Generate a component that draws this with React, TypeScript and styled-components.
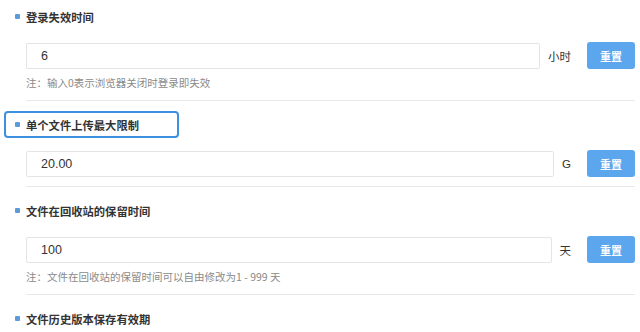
import styled, { createGlobalStyle } from 'styled-components';

const GlobalStyle = createGlobalStyle`
  html, body {
    margin: 0;
    padding: 0;
    background: #ffffff;
  }
  body {
    font-family: "Liberation Sans", "Noto Sans CJK SC", sans-serif;
    color: #333333;
  }
`;

const Page = styled.div`
  width: 640px;
  height: 332px;
  overflow: hidden;
  box-sizing: border-box;
  padding: 3px 5px 0 4px;
`;

const Section = styled.section`
  & + & {
    margin-top: 10px;
  }
`;

const TitleRow = styled.div<{ $active?: boolean }>`
  box-sizing: border-box;
  width: 175px;
  height: 27px;
  display: flex;
  align-items: center;
  padding-left: 9px;
  border: 2px solid ${p => (p.$active ? '#3d8fe0' : 'transparent')};
  border-radius: 4px;
`;

const Bullet = styled.span`
  width: 5px;
  height: 5px;
  border-radius: 1px;
  background: #5d9bd8;
  margin-right: 6px;
  flex-shrink: 0;
`;

const Title = styled.h3`
  margin: 0;
  font-family: "Noto Sans CJK SC", sans-serif;
  font-size: 11.3px;
  font-weight: 700;
  color: #333333;
  white-space: nowrap;
`;

const Body = styled.div`
  margin-left: 22px;
`;

const FieldRow = styled.div`
  display: flex;
  align-items: center;
  margin-top: 12px;
`;

const Input = styled.input`
  flex: 1;
  min-width: 0;
  box-sizing: border-box;
  height: 26px;
  border: 1px solid #e4e4e4;
  border-radius: 2px;
  padding: 0 0 0 14px;
  font-family: "Liberation Sans", "Noto Sans CJK SC", sans-serif;
  font-size: 12.5px;
  color: #333333;
  background: #ffffff;
  outline: none;
`;

const Unit = styled.span`
  margin: 0 16px 0 8px;
  font-family: "Liberation Sans", "Noto Sans CJK SC", sans-serif;
  font-size: 11.5px;
  color: #333333;
  white-space: nowrap;
`;

const ResetButton = styled.button`
  width: 48px;
  height: 27px;
  border: none;
  border-radius: 3px;
  background: #5ba6ed;
  color: #ffffff;
  font-family: "Noto Sans CJK SC", sans-serif;
  font-size: 11px;
  font-weight: 700;
  padding: 0;
  cursor: pointer;
`;

const Note = styled.p`
  margin: 6px 0 2px;
  line-height: 16px;
  font-family: "Noto Sans CJK SC", sans-serif;
  font-size: 10.5px;
  color: #8a8a8a;
  white-space: nowrap;
`;

const Divider = styled.hr`
  margin: 9px 0 0;
  border: none;
  border-top: 1px solid #e8e8e8;
`;

type Setting = {
  title: string;
  value?: string;
  unit?: string;
  note?: string;
  active?: boolean;
};

const settings: Setting[] = [
  { title: '登录失效时间', value: '6', unit: '小时', note: '注：输入0表示浏览器关闭时登录即失效' },
  { title: '单个文件上传最大限制', value: '20.00', unit: 'G', active: true },
  { title: '文件在回收站的保留时间', value: '100', unit: '天', note: '注：文件在回收站的保留时间可以自由修改为1 - 999 天' },
  { title: '文件历史版本保存有效期' },
];

export default function App() {
  return (
    <>
      <GlobalStyle />
      <Page>
        {settings.map(s => (
          <Section key={s.title}>
            <TitleRow $active={s.active}>
              <Bullet />
              <Title>{s.title}</Title>
            </TitleRow>
            {s.value !== undefined && (
              <Body>
                <FieldRow>
                  <Input defaultValue={s.value} />
                  <Unit>{s.unit}</Unit>
                  <ResetButton>重置</ResetButton>
                </FieldRow>
                {s.note && <Note>{s.note}</Note>}
                <Divider />
              </Body>
            )}
          </Section>
        ))}
      </Page>
    </>
  );
}
